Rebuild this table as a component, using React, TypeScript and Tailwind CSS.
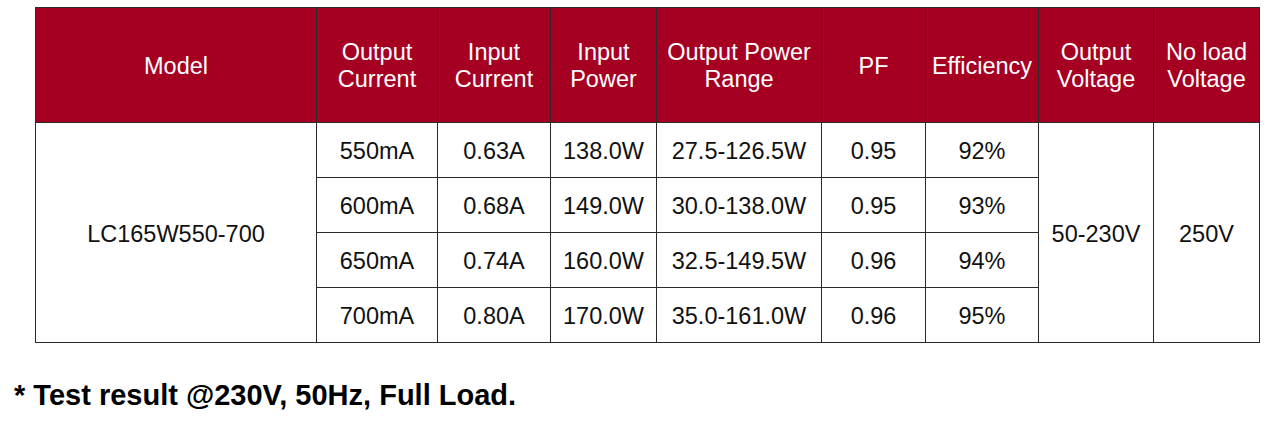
import React from "react";

const widths = [281, 121, 113, 106, 165, 104, 113, 115, 106];
const headers = [
  ["Model"],
  ["Output", "Current"],
  ["Input", "Current"],
  ["Input", "Power"],
  ["Output Power", "Range"],
  ["PF"],
  ["Efficiency"],
  ["Output", "Voltage"],
  ["No load", "Voltage"],
];
const rows = [
  ["550mA", "0.63A", "138.0W", "27.5-126.5W", "0.95", "92%"],
  ["600mA", "0.68A", "149.0W", "30.0-138.0W", "0.95", "93%"],
  ["650mA", "0.74A", "160.0W", "32.5-149.5W", "0.96", "94%"],
  ["700mA", "0.80A", "170.0W", "35.0-161.0W", "0.96", "95%"],
];

export default function App() {
  return (
    <div
      className="w-[1267px] h-[426px] bg-white text-[#111]"
      style={{ fontFamily: '"Liberation Sans", Arial, sans-serif' }}
    >
      <div className="pt-[7px] pl-[35px]">
        <table className="table-fixed border-collapse w-[1225px] text-[23.5px] leading-[27px]">
          <colgroup>
            {widths.map((w, i) => (
              <col key={i} style={{ width: w }} />
            ))}
          </colgroup>
          <thead>
            <tr className="h-[115px]">
              {headers.map((h, i) => (
                <th
                  key={i}
                  className="bg-[#a50021] text-white font-normal text-center align-middle border border-[#2a2a2a] p-0 pt-[2px]"
                >
                  {h.map((l, j) => (
                    <div key={j}>{l}</div>
                  ))}
                </th>
              ))}
            </tr>
          </thead>
          <tbody>
            {rows.map((r, ri) => (
              <tr key={ri} className="h-[55px]">
                {ri === 0 && (
                  <td
                    rowSpan={4}
                    className="border border-[#2a2a2a] text-center align-middle p-0 pt-[3px]"
                  >
                    LC165W550-700
                  </td>
                )}
                {r.map((c, ci) => (
                  <td
                    key={ci}
                    className="border border-[#2a2a2a] text-center align-middle p-0 pt-[3px]"
                  >
                    {c}
                  </td>
                ))}
                {ri === 0 && (
                  <>
                    <td
                      rowSpan={4}
                      className="border border-[#2a2a2a] text-center align-middle p-0 pt-[3px]"
                    >
                      50-230V
                    </td>
                    <td
                      rowSpan={4}
                      className="border border-[#2a2a2a] text-center align-middle p-0 pt-[3px]"
                    >
                      250V
                    </td>
                  </>
                )}
              </tr>
            ))}
          </tbody>
        </table>
      </div>
      <div className="pl-[14px] pt-[35px] text-[29px] leading-[34px] font-bold text-black">
        * Test result @230V, 50Hz, Full Load.
      </div>
    </div>
  );
}
